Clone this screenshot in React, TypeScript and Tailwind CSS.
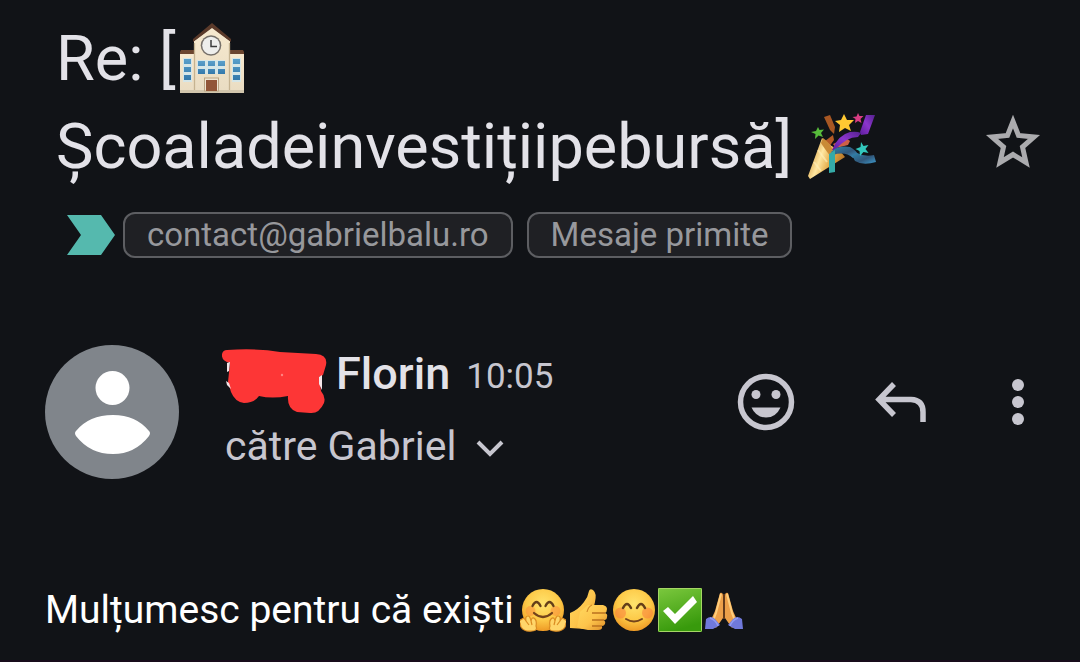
import type { ReactNode } from "react";

function SchoolEmoji() {
  return (
    <svg role="img" aria-label="school" viewBox="0 0 66 72" className="h-[72px] w-[66px] shrink-0">
      <defs>
        <linearGradient id="wall" x1="0" y1="0" x2="0" y2="1">
          <stop offset="0" stopColor="#f7e9cf" />
          <stop offset="1" stopColor="#e9dcc2" />
        </linearGradient>
        <linearGradient id="glass" x1="0" y1="0" x2="0" y2="1">
          <stop offset="0" stopColor="#5a9fca" />
          <stop offset="1" stopColor="#3479ab" />
        </linearGradient>
      </defs>
      <path d="M1 29 2 27H17V32H1ZM49 27H64L65 29V32H49Z" fill="#6b452f" />
      <path d="M1 31H17V69H1ZM49 31H65V69H49Z" fill="url(#wall)" />
      <path d="M15 18 33 4 51 18V70H15Z" fill="url(#wall)" />
      <path d="M14 16 33 0 52 16V19L33 5 14 19Z" fill="#5b3a2a" />
      <path d="M15.500 20V69M50.500 20V69" stroke="#c5b391" strokeWidth="1.300" />
      <path d="M1 68.500H65" stroke="#d2c6ad" strokeWidth="3" />
      <circle cx="32" cy="22.500" r="10.300" fill="#76706a" />
      <circle cx="32" cy="22.500" r="8.800" fill="#eeeeec" />
      <path d="M32 17V23.500H38" fill="none" stroke="#3c3c3c" strokeWidth="1.500" />
      <g fill="#d5e6e8">
        <rect x="4" y="35" width="9" height="24" />
        <rect x="53" y="35" width="9" height="24" />
        <rect x="18" y="37" width="28" height="14" />
      </g>
      <g fill="url(#glass)">
        <path d="M5 36h7v5H5zM5 44h7v5H5zM5 52h7v5H5zM54 36h7v5h-7zM54 44h7v5h-7zM54 52h7v5h-7z" />
        <path d="M19 38h7v5h-7zM29 38h7v5h-7zM39 38h7v5h-7zM19 46h7v5h-7zM29 46h7v5h-7zM39 46h7v5h-7z" />
      </g>
      <rect x="25.500" y="55" width="14" height="13" fill="#efe5d2" stroke="#bba684" strokeWidth="1" />
      <rect x="27" y="57" width="11" height="11" fill="#925638" />
    </svg>
  );
}

function PartyEmoji() {
  return (
    <svg role="img" aria-label="party popper" viewBox="0 0 72 68" className="h-[68px] w-[72px] shrink-0">
      <defs>
        <linearGradient id="cone" x1="0" y1="0.300" x2="1" y2="0.700">
          <stop offset="0" stopColor="#c98a2c" />
          <stop offset="0.350" stopColor="#ffe6a0" />
          <stop offset="0.600" stopColor="#e5ad4b" />
          <stop offset="1" stopColor="#a8651d" />
        </linearGradient>
        <linearGradient id="violet" x1="0" y1="1" x2="1" y2="0">
          <stop offset="0" stopColor="#5c1d9c" />
          <stop offset="0.500" stopColor="#8b35cc" />
          <stop offset="1" stopColor="#54218d" />
        </linearGradient>
        <linearGradient id="ribbon" x1="0" y1="0" x2="1" y2="1">
          <stop offset="0" stopColor="#2f86ae" />
          <stop offset="0.550" stopColor="#31577a" />
          <stop offset="1" stopColor="#3d9bce" />
        </linearGradient>
      </defs>
      <path d="M18 4 24 2 29 14 28 21 24 17Z" fill="#a85723" />
      <path d="M19 28 27 22 28 27 23 34Z" fill="#b65a25" />
      <path d="M27 31 40 25 44 28 42 32 30 35Z" fill="#cc6047" />
      <path d="M16 25 2 63 4 66 39 44Q35 38 24 32Z" fill="url(#cone)" />
      <path d="M12 37 21 49M8 49 15 58" stroke="#fff0bc" strokeWidth="2" opacity="0.600" />
      <path d="M17 25Q23 29 27 37L25 44Q18 35 15 30Z" fill="#c98a36" />
      <path d="M26 37Q32 22 44 19 51 18 55 20L52 24Q40 24 29 37Z" fill="url(#violet)" />
      <path d="M54 19 60 2 69 2 62 21 55 22Z" fill="url(#violet)" />
      <path d="M25 39Q32 32 44 34 50 37 53 43L47 45Q39 38 27 42Z" fill="url(#ribbon)" />
      <path d="M46 42 51 40Q59 44 68 42L70 49Q57 53 49 48Z" fill="url(#ribbon)" />
      <path d="M23 41 29 37 29 59 23 60Z" fill="#35aaa7" />
      <path d="M38 1 41 7 48 7 43 12 45 18 39 15 33 19 34 12 29 8 35 7Z" fill="#ffc832" />
      <path d="m52 0 1.500 3 4 0-3 3 1 4-3.500-2-3 2 .500-4-3-2 4-.500Z" fill="#d93d84" />
      <path d="m12 14 1.500 3 4.500-.500-3 3.500 2 4-4.500-1.500L9 26l.500-5L5 19l5-1Z" fill="#57bc3b" />
      <path d="m55 29 2.500 4 5-1-3 4 3 4-5-1-3.500 4-.500-5-4-2 5-2Z" fill="#32c8bd" />
    </svg>
  );
}

function FaceDefs({ id }: { id: string }) {
  return (
    <radialGradient id={id} cx="0.500" cy="0.350" r="0.650">
      <stop offset="0" stopColor="#ffe36d" />
      <stop offset="0.600" stopColor="#fdc947" />
      <stop offset="1" stopColor="#ee9a25" />
    </radialGradient>
  );
}

function HugEmoji() {
  return (
    <svg role="img" aria-label="hugging face" viewBox="0 0 46 44" className="h-11 w-[46px] shrink-0">
      <defs><FaceDefs id="hug" /></defs>
      <circle cx="23" cy="22" r="21" fill="url(#hug)" />
      <circle cx="10.500" cy="23" r="5" fill="#f9893b" opacity="0.500" />
      <circle cx="35.500" cy="23" r="5" fill="#f9893b" opacity="0.500" />
      <path d="M12.500 18q4-8 8 0M25.500 18q4-8 8 0" fill="none" stroke="#643f19" strokeWidth="2.300" strokeLinecap="round" />
      <path d="M14 25q9 8 18 0" fill="none" stroke="#74431b" strokeWidth="2.200" strokeLinecap="round" />
      <path d="M2 31q2-2 4 2-1-5 2-5 2 0 3 5 1-5 4-2 2 2 1 7 2 5-4 5-8 1-11-4l-1-4q-2-2 2-4Z" fill="#ffd66a" stroke="#db8c22" strokeWidth="1.200" />
      <path d="M44 31q-2-2-4 2 1-5-2-5-2 0-3 5-1-5-4-2-2 2-1 7-2 5 4 5 8 1 11-4l1-4q2-2-2-4Z" fill="#ffd66a" stroke="#db8c22" strokeWidth="1.200" />
      <path d="M6 33l3 4M11 33l1 4M40 33l-3 4M35 33l-1 4" stroke="#db8c22" strokeWidth="1.200" />
    </svg>
  );
}

function ThumbEmoji() {
  return (
    <svg role="img" aria-label="thumbs up" viewBox="0 0 42 44" className="h-11 w-[42px] shrink-0">
      <defs>
        <linearGradient id="thumb" x1="0" y1="0" x2="1" y2="1">
          <stop offset="0" stopColor="#ffd960" />
          <stop offset="0.550" stopColor="#fdc44b" />
          <stop offset="1" stopColor="#dc8a27" />
        </linearGradient>
      </defs>
      <path d="M2 25q8-3 14-11 4-5 5-11 1-3 4-1 4 3 2 12l-1 4H20L17 41 2 40Z" fill="url(#thumb)" />
      <path d="M20 17h15q4 1 4 4 0 3-2 4 3 1 2 4 0 3-3 3 2 2 1 4-1 2-3 2 1 4-4 4H20q-7-1-11-3l3-15Z" fill="url(#thumb)" />
      <path d="M37 25H24M36 32H24M34 38H24" stroke="#ba721f" strokeWidth="1.300" />
      <path d="M24 17q-4 2-5 7" fill="none" stroke="#d28a2a" strokeWidth="1.200" />
    </svg>
  );
}

function SmileEmoji() {
  return (
    <svg role="img" aria-label="smiling face" viewBox="0 0 44 44" className="size-11 shrink-0">
      <defs><FaceDefs id="smile" /></defs>
      <circle cx="22" cy="22" r="21" fill="url(#smile)" />
      <circle cx="8.500" cy="25" r="5.500" fill="#f9783b" opacity="0.500" />
      <circle cx="35.500" cy="25" r="5.500" fill="#f9783b" opacity="0.500" />
      <path d="M11 20q4-8 8 0M25 20q4-8 8 0" fill="none" stroke="#643f19" strokeWidth="2.500" strokeLinecap="round" />
      <path d="M14 31q8 5 16 0" fill="none" stroke="#74431b" strokeWidth="2" strokeLinecap="round" />
    </svg>
  );
}

function CheckEmoji() {
  return (
    <svg role="img" aria-label="check mark" viewBox="0 0 44 44" className="size-11 shrink-0">
      <defs>
        <linearGradient id="check" x1="0" y1="0" x2="0.300" y2="1">
          <stop offset="0" stopColor="#7cc83e" />
          <stop offset="1" stopColor="#389a0c" />
        </linearGradient>
      </defs>
      <rect width="44" height="44" rx="1" fill="url(#check)" />
      <rect x="0.500" y="0.500" width="43" height="43" rx="1" fill="none" stroke="#a6d666" />
      <path d="M5 23 10 19 17 26 35 8 39 14 17 36Z" fill="#fff" />
    </svg>
  );
}

function PrayEmoji() {
  return (
    <svg role="img" aria-label="folded hands" viewBox="0 0 40 44" className="h-11 w-10 shrink-0">
      <path d="M16 5q3-1 3 3v22l-7 10-6-6 5-11Z" fill="#eda04a" />
      <path d="M24 5q-3-1-3 3v22l7 10 6-6-5-11Z" fill="#eda04a" />
      <path d="M17 6 12 25 9 33M23 6 28 25 31 33" fill="none" stroke="#ffce7c" strokeWidth="2" />
      <path d="M20 6V31" stroke="#91511c" strokeWidth="1.300" />
      <path d="M2 31q5-4 9 0l5 6-7 4H1ZM38 31q-5-4-9 0l-5 6 7 4h8Z" fill="#7079db" />
      <path d="M6 30q6 2 8 8M34 30q-6 2-8 8" fill="none" stroke="#939cf0" strokeWidth="1.500" />
    </svg>
  );
}

function Chip({ children }: { children: ReactNode }) {
  return (
    <button type="button" className="h-[46px] rounded-xl border-2 border-[#5d5e62] bg-[#1f2024] px-[22px] text-[33px] leading-[42px] whitespace-nowrap text-[#97989c]">
      {children}
    </button>
  );
}

function Scribble() {
  return (
    <svg role="img" aria-label="hidden name" viewBox="0 0 106 68" className="h-[68px] w-[106px] shrink-0">
      <path d="M5 2Q35 0 58 4L94 6Q106 7 104 17L101 27 97 29 99 43Q104 49 102 55 97 66 88 65L75 64Q65 61 66 48 50 51 37 48 32 55 22 55 13 54 9 44L6 34 8 15Q-1 13 0 6 1 2 5 2Z" fill="#fd3636" />
      <path d="M5 15 8 14 7 23 5 24ZM4 33 7 35 9 41 5 37ZM97 29 100 27 100 42 97 36Z" fill="#f4e5e8" />
      <circle cx="60" cy="27" r="1.200" fill="#ff8580" />
    </svg>
  );
}

export default function App() {
  return (
    <main className="min-h-screen border-b-2 border-[#180c1b] bg-[#111317] font-[Roboto,sans-serif] text-[#c7c6cf]">
      <header className="flex items-end pt-[15px] pr-[39px] pl-14">
        <h1 className="min-w-0 flex-1 text-[63px] leading-[88px] text-[#e3e2e8]">
          <span className="flex h-[88px] items-center gap-[3px]">Re: [<SchoolEmoji /></span>
          <span className="flex h-[88px] items-center gap-[14px]">Școaladeinvestițiipebursă]<PartyEmoji /></span>
        </h1>
        <button type="button" aria-label="Star" className="mb-[22px]">
          <svg viewBox="0 0 56 54" className="h-[54px] w-14" fill="none" stroke="#ababae" strokeWidth="5">
            <path d="M28 6.500 33.500 20.500 49 22 37.500 32 41 47.500 28 39.500 15 47.500 18.500 32 7 22 22.500 20.500Z" />
          </svg>
        </button>
      </header>

      <div className="flex items-center pt-[21px] pl-[67px]">
        <svg aria-hidden="true" viewBox="0 0 48 40" className="mr-2 h-10 w-12"><path d="M0 0H34L48 20 34 40H0L14 20Z" fill="#55b9ae" /></svg>
        <div className="flex gap-[14px]">
          <Chip>contact@gabrielbalu.ro</Chip>
          <Chip>Mesaje primite</Chip>
        </div>
      </div>

      <section className="flex items-center pt-[87px] pr-[55px] pl-[45px]">
        <svg role="img" aria-label="Avatar" viewBox="0 0 134 134" className="size-[134px] shrink-0">
          <circle cx="67" cy="67" r="67" fill="#80858b" />
          <circle cx="67.500" cy="43" r="17" fill="#fff" />
          <path d="M31 86Q44 70 68 70 91 70 104 86 106 88 104 91 90 109 68 109 45 109 31 91 29 88 31 86Z" fill="#fff" />
        </svg>
        <div className="ml-[43px] flex-1">
          <div className="flex h-[68px] items-start">
            <Scribble />
            <span className="ml-2 text-[45px] leading-[52px] font-medium text-[#e3e2e8]">Florin</span>
            <time className="ml-4 text-[35px] leading-[58px]">10:05</time>
          </div>
          <button type="button" className="ml-[3px] flex items-center text-[41px] leading-[60px]">
            către Gabriel
            <svg aria-hidden="true" viewBox="0 0 28 18" className="mt-1 ml-5 h-[18px] w-7" fill="none" stroke="currentColor" strokeWidth="4"><path d="M2 3 14 15 26 3" /></svg>
          </button>
        </div>
        <div className="flex items-center pb-5">
          <button type="button" aria-label="Add reaction">
            <svg viewBox="0 0 58 58" className="size-[58px]" fill="currentColor">
              <circle cx="29" cy="29" r="25.500" fill="none" stroke="currentColor" strokeWidth="5.500" />
              <circle cx="19" cy="21.500" r="4.500" /><circle cx="39" cy="21.500" r="4.500" />
              <path d="M14.500 34.500H43.500Q39 44.500 29 44.500T14.500 34.500Z" />
            </svg>
          </button>
          <button type="button" aria-label="Reply" className="ml-20">
            <svg viewBox="0 0 52 40" className="h-10 w-[52px]" fill="none" stroke="currentColor" strokeWidth="5.500">
              <path d="M19 2 4 17.500 19 33M4 17.500H36Q48 18 48 30V40" />
            </svg>
          </button>
          <button type="button" aria-label="More options" className="ml-[84px]">
            <svg viewBox="0 0 14 48" className="h-12 w-[14px]" fill="currentColor"><circle cx="7" cy="7" r="6" /><circle cx="7" cy="24" r="6" /><circle cx="7" cy="41" r="6" /></svg>
          </button>
        </div>
      </section>

      <p className="flex items-center gap-[6px] pt-[101px] pl-[45px] text-[39px] leading-[60px] text-white">
        Mulțumesc pentru că exiști
        <span className="flex items-center gap-[2px]">
          <HugEmoji />
          <ThumbEmoji />
          <SmileEmoji />
          <CheckEmoji />
          <PrayEmoji />
        </span>
      </p>
    </main>
  );
}
